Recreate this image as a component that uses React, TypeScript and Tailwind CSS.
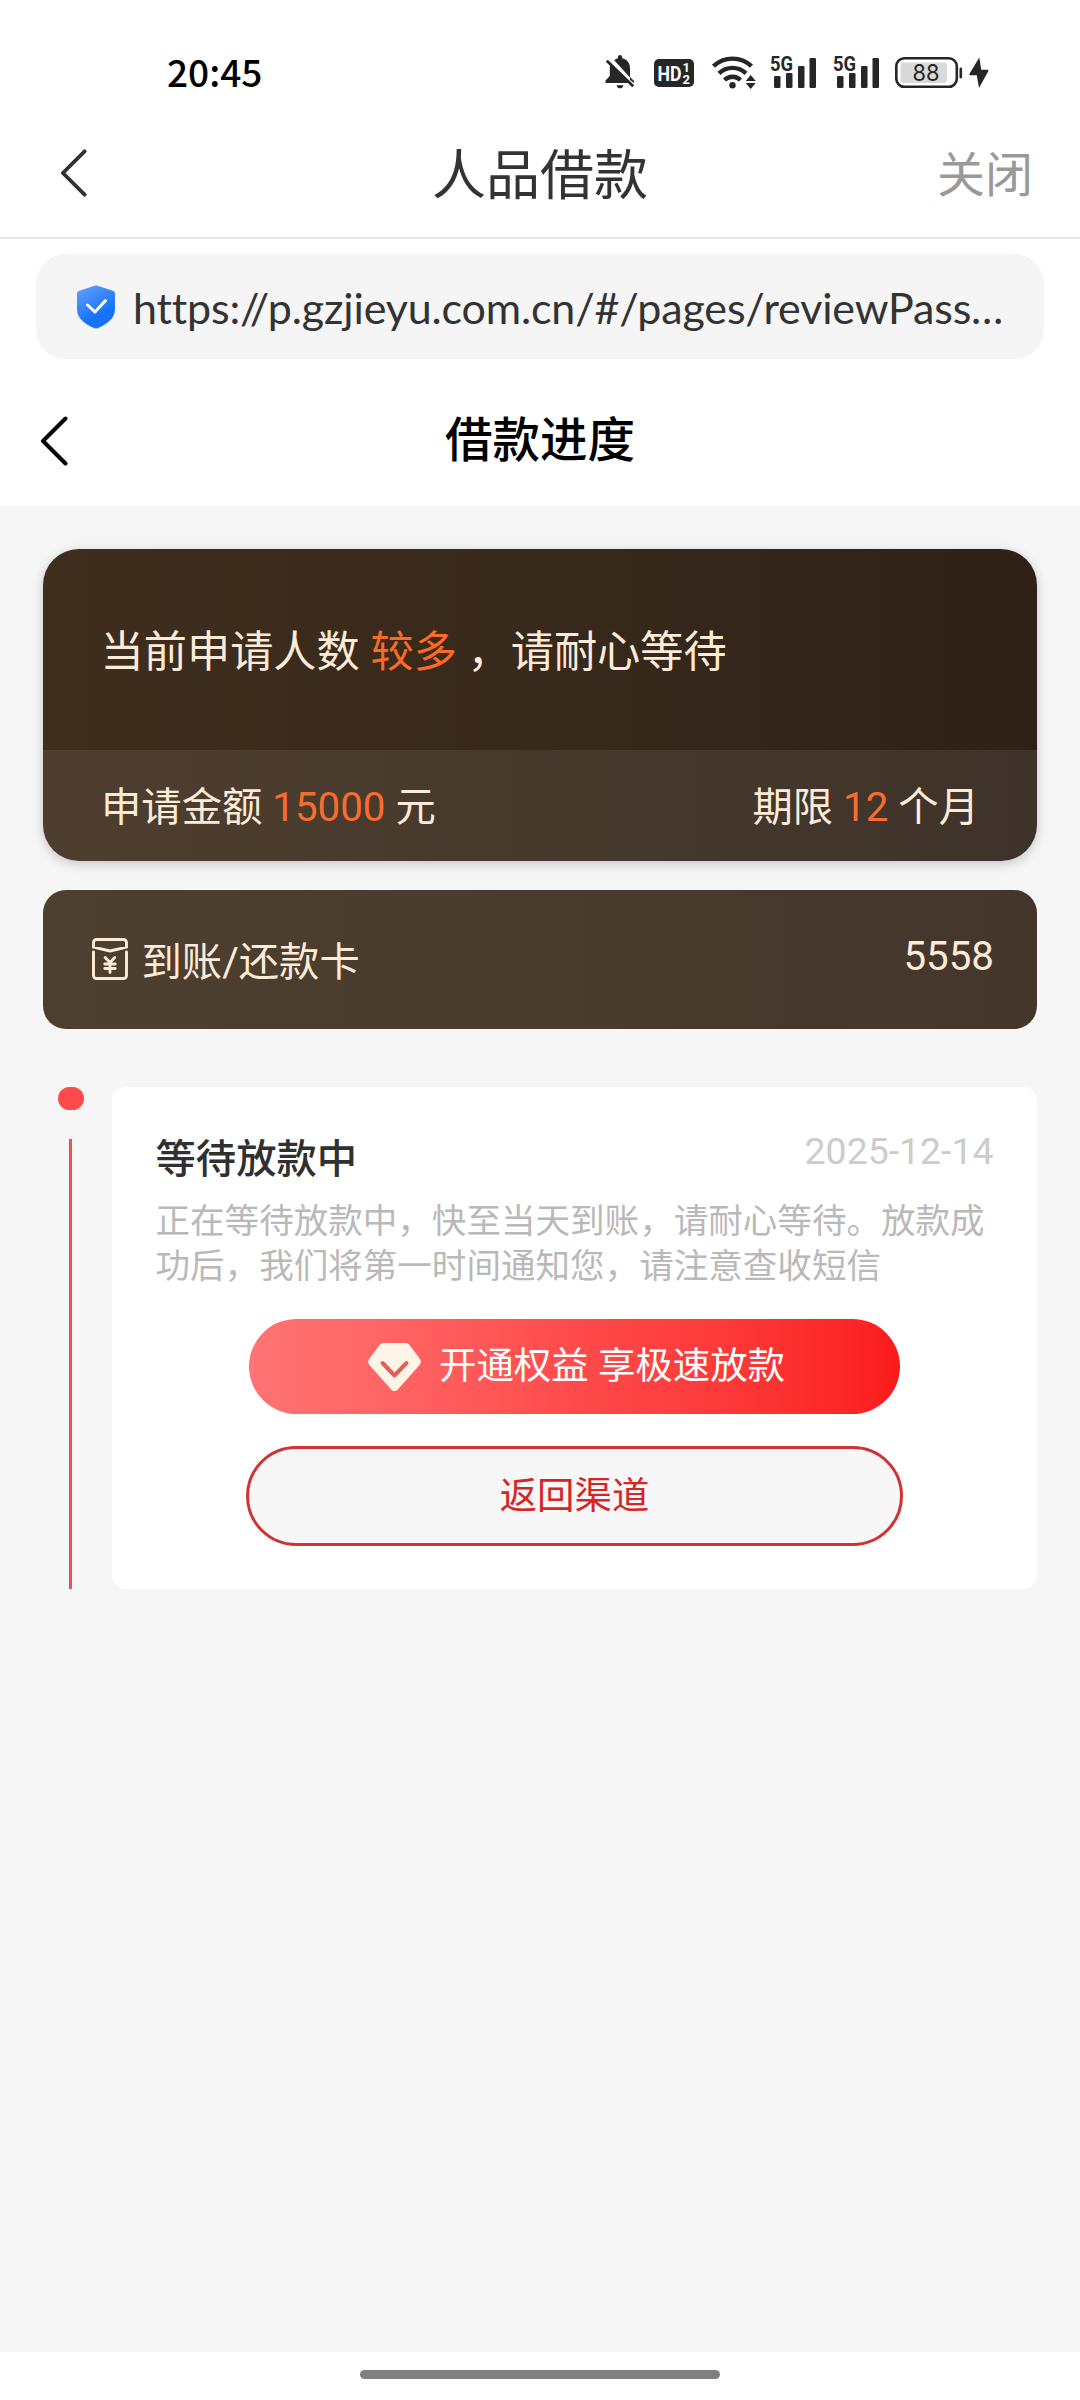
function BellOffIcon() {
  return (
    <svg className="w-[30px] h-[34px]" viewBox="0 0 30 34" fill="#262626">
      <path d="M12.900 3.200V2.200a2.100 2.100 0 0 1 4.200 0v1C22 4.200 25 8 25 13v9.400L9.200 5.200C10.300 4.200 11.500 3.500 12.900 3.200z" />
      <path d="M5.600 9.400L23.700 28H.5v-2.600L4.800 21v-8c0-1.300.3-2.500.8-3.600z" />
      <path d="M11.500 30.200h7c-.4 2-1.700 3.100-3.500 3.100s-3.100-1.100-3.500-3.100z" />
      <path d="M1.800 5.800l26.400 25.400" stroke="#262626" strokeWidth="2.800" />
      <path d="M25 22l4 4v2l-4-3z" />
    </svg>
  );
}

function HdIcon() {
  return (
    <svg className="w-10 h-7" viewBox="0 0 40 28">
      <rect width="40" height="28" rx="5" fill="#262626" />
      <text x="3.500" y="21.800" fontSize="21" fontWeight="700" fill="#fff" fontFamily="Roboto, sans-serif" textLength="24" lengthAdjust="spacingAndGlyphs">HD</text>
      <text x="28.500" y="13" fontSize="13" fontWeight="700" fill="#fff" fontFamily="Roboto, sans-serif">1</text>
      <text x="28.500" y="24.800" fontSize="13" fontWeight="700" fill="#fff" fontFamily="Roboto, sans-serif">2</text>
    </svg>
  );
}

function WifiIcon() {
  return (
    <svg className="w-11 h-[34px]" viewBox="0 0 44 34" fill="none" stroke="#262626" strokeWidth="4.400">
      <path d="M1.500 11.200a27.500 27.500 0 0 1 38 0" />
      <path d="M7 18.300a19.500 19.500 0 0 1 27 0" />
      <path d="M12.500 25a11.500 11.500 0 0 1 16 0" />
      <circle cx="20.500" cy="30.300" r="3.200" fill="#262626" stroke="none" />
      <path d="M38.700 20l5 6h-10zM38.700 34l5-6h-10z" fill="#262626" stroke="none" />
    </svg>
  );
}

function SignalIcon() {
  return (
    <svg className="-mt-1 h-[38px] w-[46px] overflow-visible" viewBox="0 -4 46 38" fill="#262626">
      <rect x="4" y="21" width="6.500" height="12" rx="1.300" />
      <rect x="16" y="18" width="6.500" height="15" rx="1.300" />
      <rect x="28" y="11" width="6.500" height="22" rx="1.300" />
      <rect x="39.500" y="3" width="6.500" height="30" rx="1.300" />
      <text x="0" y="15.800" fontSize="20" fontWeight="700" fontFamily="Roboto, sans-serif" textLength="23" lengthAdjust="spacingAndGlyphs">5G</text>
    </svg>
  );
}

function BatteryIcon() {
  return (
    <svg className="w-[94px] h-[32px]" viewBox="0 0 94 32">
      <rect x="1.300" y="1.300" width="60.500" height="28.500" rx="8" fill="none" stroke="#262626" strokeWidth="2.600" />
      <rect x="5.500" y="5.500" width="46.500" height="20.500" rx="3" fill="#d9d9d9" />
      <rect x="64.500" y="10.500" width="2.600" height="11" rx="1.300" fill="#262626" />
      <text x="31" y="24" textAnchor="middle" fontSize="23.500" fill="#262626" fontFamily="Inter, sans-serif" textLength="27" lengthAdjust="spacingAndGlyphs">88</text>
      <path d="M84.300.5L74.500 16.800c-.3.800 0 1.500.9 1.500h6.400L84 31l9.300-16.800c.4-.8 0-1.500-.9-1.500h-6.200z" fill="#262626" />
    </svg>
  );
}

function ShieldIcon() {
  return (
    <svg className="w-[38px] h-11" viewBox="0 0 38 44">
      <defs>
        <linearGradient id="shield" x1="0" y1="0" x2="0.500" y2="1">
          <stop offset="0" stopColor="#64a3fb" />
          <stop offset="0.800" stopColor="#1672fb" />
        </linearGradient>
      </defs>
      <path d="M17.600.700a4 4 0 0 1 2.800 0l15.400 5A3 3 0 0 1 38 8.500V24c0 9.500-8 15-17 19a5 5 0 0 1-4 0C8 39 0 33.500 0 24V8.500a3 3 0 0 1 2.200-2.800z" fill="url(#shield)" />
      <path d="M10.500 20l7.500 7L28.500 15.500" fill="none" stroke="#fff" strokeWidth="3" strokeLinecap="round" strokeLinejoin="round" />
    </svg>
  );
}

function BackIcon({ className }: { className: string }) {
  return (
    <svg className={className} viewBox="0 0 28 50" fill="none" stroke="currentColor" strokeWidth="4" strokeLinecap="round" strokeLinejoin="round">
      <path d="M25.500 2.500L3 25l22.500 22.500" />
    </svg>
  );
}

function WalletIcon() {
  return (
    <svg className="w-9 h-[42px]" viewBox="0 0 36 42" fill="none" stroke="#fcebd8" strokeWidth="2.900" strokeLinejoin="round" strokeLinecap="round">
      <path d="M4.500 1.500h27a3 3 0 0 1 3 3v4.700L18 13 1.500 9.200V4.500a3 3 0 0 1 3-3z" />
      <path d="M1.500 14v23.500a3 3 0 0 0 3 3h27a3 3 0 0 0 3-3V14" />
      <path d="M13.200 19.500l4.800 5 4.800-5M18 24.500v10M12.800 26h10.400M12.800 30.500h10.400" />
    </svg>
  );
}

function DiamondIcon() {
  return (
    <svg className="w-[53px] h-12" viewBox="0 0 53 48">
      <path d="M15.500 0h22c1.500 0 2.700.5 3.600 1.600l10.700 14.200c1.500 2 1.400 4.300-.2 6.100L29.800 46.400c-1.900 2-4.700 2-6.600 0L1.400 21.900c-1.600-1.800-1.700-4.100-.2-6.100L11.900 1.600C12.800.5 14 0 15.500 0z" fill="#fff5e6" />
      <path d="M14.500 20l12 12.500L38.500 20" fill="none" stroke="#e0605c" strokeWidth="4" strokeLinecap="round" strokeLinejoin="round" />
    </svg>
  );
}

function StatusBar() {
  return (
    <div className="flex h-[110px] items-start pl-[167px]">
      <span className="w-[438px] pt-[51px] font-['Noto_Sans_CJK_SC',sans-serif] text-[37px] leading-10 font-medium text-black">20:45</span>
      <div className="flex items-start pt-[55px]">
        <BellOffIcon />
        <div className="ml-[19px] pt-1">
          <HdIcon />
        </div>
        <div className="ml-[18px]">
          <WifiIcon />
        </div>
        <div className="ml-3.5">
          <SignalIcon />
        </div>
        <div className="ml-[17px]">
          <SignalIcon />
        </div>
        <div className="ml-4 pt-0.5">
          <BatteryIcon />
        </div>
      </div>
    </div>
  );
}

function LoanCard() {
  return (
    <div className="h-[312px] overflow-hidden rounded-[36px] bg-linear-to-r from-[#3f2e1e] via-[#37291b] to-[#2f2118] text-[#fcebd8] shadow-[0_3px_12px_rgba(0,0,0,0.2)]">
      <div className="flex h-[201px] items-center pt-[6px] pl-[57.600px] text-[43.200px] leading-[60px] whitespace-pre">
        当前申请人数 <span className="text-[#fc6a23]">较多</span> ，请耐心等待
      </div>
      <div className="flex h-[111px] items-center justify-between bg-white/8 px-[58px] pt-[4px] text-[40.320px] leading-[56px]">
        <div>
          申请金额 <span className="text-[#f96c2e]">15000</span> 元
        </div>
        <div>
          期限 <span className="text-[#f96c2e]">12</span> 个月
        </div>
      </div>
    </div>
  );
}

function ProgressItem() {
  return (
    <div className="mt-[58px] flex h-[502px]">
      <div className="flex w-[69px] flex-col items-center pr-[14px]">
        <div className="h-[23px] w-[26px] rounded-[12px] bg-[#fd4a4c]" />
        <div className="mt-[29px] w-[3px] flex-1 bg-[#e05558]" />
      </div>
      <div className="flex-1 rounded-[14px] bg-white px-[43.500px] pt-[36px]">
        <div className="flex items-start justify-between">
          <h2 className="pt-[9px] text-[40.320px] leading-[56px] font-medium text-[#303030]">等待放款中</h2>
          <span className="text-[37.440px] leading-[56px] text-[#ccc]">2025-12-14</span>
        </div>
        <p className="mt-[11px] text-[34.560px] leading-[45px] text-[#b9b9b9]">
          正在等待放款中，快至当天到账，请耐心等待。放款成功后，我们将第一时间通知您，请注意查收短信
        </p>
        <div className="mt-[30px] flex flex-col items-center">
          <button className="flex h-[95px] w-[651px] items-center justify-center rounded-full bg-linear-to-r from-[#ff7475] via-[#ff4a4b] to-[#fb1a1c] pl-[4px] text-[37.440px] leading-[52px] text-white">
            <DiamondIcon />
            <span className="ml-[18px] -mt-[1px]">开通权益 享极速放款</span>
          </button>
          <button className="mt-[32px] h-[100px] w-[657px] rounded-full border-[3px] border-[#d23232] bg-[#f7f7f7] text-[37.440px] leading-[52px] text-[#d42626]">
            返回渠道
          </button>
        </div>
      </div>
    </div>
  );
}

export default function App() {
  return (
    <div className="flex h-[2400px] w-[1080px] flex-col overflow-hidden bg-white font-[Roboto,'Noto_Sans_CJK_SC',sans-serif]">
      <StatusBar />

      {/* App title bar */}
      <div className="flex h-[129px] items-center justify-between border-b-2 border-[#e8e8e8] px-[47px] font-['Noto_Sans_CJK_SC',sans-serif]">
        <div className="w-[98px] pl-[13px]">
          <BackIcon className="-mt-[2px] h-[50px] w-[27px] text-[#333]" />
        </div>
        <h1 className="-mt-[3px] text-[54px] leading-[64px] text-[#333]">人品借款</h1>
        <span className="-mt-[5px] w-[98px] text-right text-[48px] leading-[64px] text-[#999]">关闭</span>
      </div>

      {/* Address bar */}
      <div className="mx-[36px] mt-[15px] flex h-[105px] items-center rounded-[30px] bg-[#f5f5f5] pl-[41px]">
        <ShieldIcon />
        <span className="ml-[18px] pt-[2px] font-[Lato,sans-serif] text-[43px] leading-[60px] tracking-[-0.15px] whitespace-nowrap text-[#333] [font-variant-ligatures:none]">
          https://p.gzjieyu.com.cn/#/pages/reviewPass…
        </span>
      </div>

      {/* Page title */}
      <div className="flex h-[147px] items-center justify-between px-[40px] pt-[16px] text-black">
        <BackIcon className="h-[50px] w-[28px]" />
        <h1 className="pt-[1px] text-[47.500px] leading-[64px] font-medium">借款进度</h1>
        <div className="w-[28px]" />
      </div>

      <main className="flex-1 bg-[#f6f6f6] px-[43px] pt-[43px]">
        <LoanCard />
        <div className="mt-[29px] flex h-[139px] items-start justify-between rounded-[23px] bg-linear-to-r from-[#4e4030] to-[#44362b] pr-[43px] pl-[48.500px] text-[40.320px] leading-[56px] text-[#fcebd8]">
          <div className="flex pt-[45px]">
            <div className="pt-[3px]">
              <WalletIcon />
            </div>
            <span className="ml-[14px]">到账/还款卡</span>
          </div>
          <span className="pt-[39px]">5558</span>
        </div>
        <ProgressItem />
      </main>

      {/* Gesture bar */}
      <div className="flex h-12 justify-center pt-[18px]">
        <div className="h-[9px] w-[360px] rounded-full bg-[#808080]" />
      </div>
    </div>
  );
}
